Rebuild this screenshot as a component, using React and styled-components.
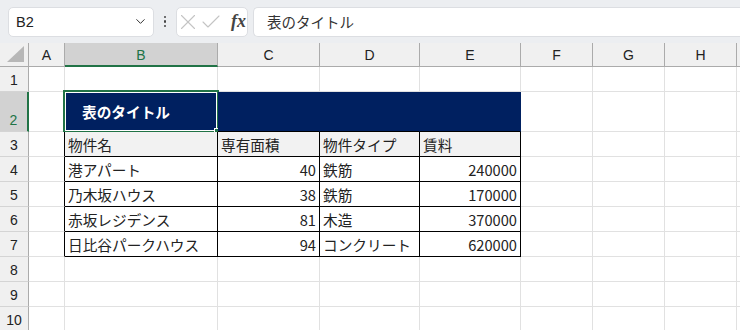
import React from "react";
import styled, { createGlobalStyle } from "styled-components";
import { ChevronDown, X, Check } from "lucide-react";

const GREEN = "#217346";
const NAVY = "#002060";
const GRID = "#e1e1e1";

const columns = ["A", "B", "C", "D", "E", "F", "G", "H", ""];
const rowHeights = [25, 40, 25, 25, 25, 25, 25, 25, 25, 25];

const table = [
  ["物件名", "専有面積", "物件タイプ", "賃料"],
  ["港アパート", 40, "鉄筋", 240000],
  ["乃木坂ハウス", 38, "鉄筋", 170000],
  ["赤坂レジデンス", 81, "木造", 370000],
  ["日比谷パークハウス", 94, "コンクリート", 620000],
];

const App = () => {
  const renderCell = (row, col) => {
    const key = `${row}-${col}`;
    // title row
    if (row === 2 && col >= 1 && col <= 4) {
      return (
        <Cell key={key} $bg={NAVY} $right={NAVY} $bottom="#000">
          {col === 1 && (
            <>
              <Title>表のタイトル</Title>
              <Selection>
                <Handle />
              </Selection>
            </>
          )}
        </Cell>
      );
    }
    // bordered table
    if (row >= 3 && row <= 7 && col >= 1 && col <= 4) {
      const value = table[row - 3][col - 1];
      const numeric = typeof value === "number";
      return (
        <Cell
          key={key}
          $bg={row === 3 ? "#f2f2f2" : "#fff"}
          $right="#000"
          $bottom="#000"
          $alignRight={numeric}
        >
          {value}
        </Cell>
      );
    }
    return (
      <Cell
        key={key}
        $right={col === 0 && row >= 3 && row <= 7 ? "#000" : GRID}
        $bottom={GRID}
      />
    );
  };

  return (
    <>
      <GlobalStyle />
      <Toolbar>
        <NameBox>
          <span>B2</span>
          <ChevronDown size={15} strokeWidth={1.6} color="#333" />
        </NameBox>
        <Dots>
          <i />
          <i />
          <i />
        </Dots>
        <FxBox>
          <X size={26} strokeWidth={1} color="#c4c4c4" style={{ marginLeft: -2 }} />
          <Check size={24} strokeWidth={1.1} color="#c4c4c4" style={{ marginLeft: -2 }} />
          <Fx>fx</Fx>
        </FxBox>
        <FormulaBox>表のタイトル</FormulaBox>
      </Toolbar>
      <Sheet $rows={rowHeights}>
        <Corner>
          <svg width="18" height="17" viewBox="0 0 18 17">
            <polygon points="17,0 17,16 0,16" fill="#b7b7b7" />
          </svg>
        </Corner>
        {columns.map((c, i) => (
          <ColHeader key={c + i} $selected={c === "B"}>
            {c}
          </ColHeader>
        ))}
        {rowHeights.map((_, r) => {
          const row = r + 1;
          return (
            <React.Fragment key={row}>
              <RowHeader $selected={row === 2}>{row}</RowHeader>
              {columns.map((_, c) => renderCell(row, c))}
            </React.Fragment>
          );
        })}
      </Sheet>
    </>
  );
};

const GlobalStyle = createGlobalStyle`
  body {
    margin: 0;
    background: #fff;
    font-family: "Noto Sans CJK JP", "Liberation Sans", sans-serif;
    overflow: hidden;
  }
`;

const Toolbar = styled.div`
  height: 43px;
  background: #eceef1;
  display: flex;
  align-items: center;
  padding: 0 0 0 8px;
  box-sizing: border-box;
`;

const NameBox = styled.div`
  width: 146px;
  height: 30px;
  box-sizing: border-box;
  background: #fff;
  border: 1px solid #dcdee2;
  border-radius: 5px;
  display: flex;
  align-items: center;
  justify-content: space-between;
  padding: 0 5px 0 7px;
  font-family: "Liberation Sans", sans-serif;
  font-size: 14.5px;
  color: #222;
`;

const Dots = styled.div`
  width: 22px;
  display: flex;
  flex-direction: column;
  align-items: center;
  gap: 2px;

  i {
    width: 2.5px;
    height: 2.5px;
    border-radius: 50%;
    background: #444;
  }
`;

const FxBox = styled.div`
  width: 72px;
  height: 30px;
  box-sizing: border-box;
  background: #fff;
  border: 1px solid #dcdee2;
  border-radius: 5px;
  display: flex;
  align-items: center;
  padding: 0;
  overflow: hidden;
`;

const Fx = styled.span`
  font-family: "Liberation Serif", serif;
  font-style: italic;
  font-weight: bold;
  font-size: 18px;
  color: #444;
  margin-left: 8px;
`;

const FormulaBox = styled.div`
  flex: 1;
  height: 30px;
  box-sizing: border-box;
  margin-left: 5px;
  background: #fff;
  border: 1px solid #dcdee2;
  border-right: none;
  border-radius: 5px 0 0 5px;
  display: flex;
  align-items: center;
  padding-left: 13px;
  font-size: 14.5px;
  color: #333;
`;

const Sheet = styled.div`
  display: grid;
  grid-template-columns: 29px 36px 153px 102px 100px 101px 72px 72px 72px 1fr;
  grid-template-rows: 24px ${(p) => p.$rows.map((h) => `${h}px`).join(" ")};
  font-size: 14.67px;
  color: #222;
`;

const Corner = styled.div`
  background: #f0f0f0;
  border-right: 1px solid #ababab;
  border-bottom: 1px solid #ababab;
  display: flex;
  align-items: flex-end;
  justify-content: flex-end;
  padding: 0 3px 3px 0;
`;

const ColHeader = styled.div`
  background: ${(p) => (p.$selected ? "#d2d2d2" : "#f0f0f0")};
  color: ${(p) => (p.$selected ? GREEN : "#222")};
  border-right: 1px solid #ababab;
  border-bottom: ${(p) => (p.$selected ? `2px solid ${GREEN}` : "1px solid #ababab")};
  display: flex;
  align-items: center;
  justify-content: center;
  font-family: "Liberation Sans", sans-serif;
  font-size: 14px;
  padding-top: 1px;
`;

const RowHeader = styled.div`
  background: ${(p) => (p.$selected ? "#d2d2d2" : "#f0f0f0")};
  color: ${(p) => (p.$selected ? GREEN : "#222")};
  border-right: ${(p) => (p.$selected ? `2px solid ${GREEN}` : "1px solid #ababab")};
  border-bottom: 1px solid #d4d4d4;
  display: flex;
  align-items: flex-end;
  justify-content: center;
  padding-bottom: 3px;
  font-family: "Liberation Sans", sans-serif;
  font-size: 14px;
`;

const Cell = styled.div`
  position: relative;
  background: ${(p) => p.$bg || "#fff"};
  border-right: 1px solid ${(p) => p.$right};
  border-bottom: 1px solid ${(p) => p.$bottom};
  display: flex;
  align-items: center;
  justify-content: ${(p) => (p.$alignRight ? "flex-end" : "flex-start")};
  padding: 0 3px 0 3px;
  white-space: nowrap;
  min-width: 0;
`;

const Title = styled.span`
  color: #fff;
  font-weight: bold;
  padding-left: 14px;
`;

const Selection = styled.div`
  position: absolute;
  left: -2px;
  top: -2px;
  right: -2px;
  bottom: -2px;
  border: 2px solid ${GREEN};
  box-shadow: inset 0 0 0 1px #fff;
`;

const Handle = styled.div`
  position: absolute;
  right: -5px;
  bottom: -5px;
  width: 6px;
  height: 6px;
  background: ${GREEN};
  border: 1px solid #fff;
`;

export default App;
